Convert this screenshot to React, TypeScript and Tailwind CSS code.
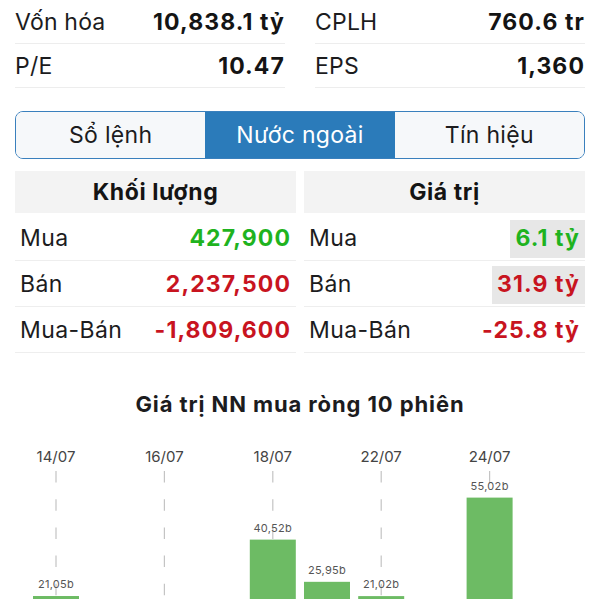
import React from "react";

const font = { fontFamily: "Inter, 'Noto Sans', sans-serif" };

function TopCell({ label, value }: { label: string; value: string }) {
  return (
    <div className="flex h-[44px] items-center justify-between border-b border-[#ededed] pt-[1px]">
      <span className="text-[23px] text-[#1c1c1e] tracking-[0.2px]">{label}</span>
      <span className="text-[23px] font-bold text-[#141414] tracking-[1.1px]">{value}</span>
    </div>
  );
}

type Row = { label: string; value: string; color: string; hl?: boolean };

function Table({ title, rows }: { title: string; rows: Row[] }) {
  return (
    <div className="flex flex-col">
      <div className="flex h-[42px] items-center justify-center bg-[#f3f3f3] text-[23px] font-bold text-[#141414] tracking-[0.6px]">
        {title}
      </div>
      <div className="mt-[2px] flex flex-col">
        {rows.map((r) => (
          <div
            key={r.label}
            className="flex h-[46px] items-center justify-between border-b border-[#eeeeee] pl-[5px] pt-[2px]"
          >
            <span className="text-[23px] text-[#1c1c1e] tracking-[0.4px]">{r.label}</span>
            <span
              className={
                "flex h-[38px] items-center px-[5px] text-[23px] font-bold tracking-[1.1px] " +
                r.color +
                (r.hl ? " bg-[#e7e7e7]" : "")
              }
            >
              {r.value}
            </span>
          </div>
        ))}
      </div>
    </div>
  );
}

const bars = [
  { d: "14/07", v: 21.05 },
  { d: "15/07", v: 6.1 },
  { d: "16/07", v: 4.3 },
  { d: "17/07", v: 8.7 },
  { d: "18/07", v: 40.52 },
  { d: "21/07", v: 25.95 },
  { d: "22/07", v: 21.02 },
  { d: "23/07", v: 9.4 },
  { d: "24/07", v: 55.02 },
  { d: "25/07", v: 7.2 },
];

function Chart() {
  const base = 218;
  const k = 2.897;
  const slot = 54.2;
  const x0 = 56;
  return (
    <svg width="600" height="160" viewBox="0 0 600 160" className="block">
      {bars.map((b, i) => {
        const cx = x0 + i * slot;
        if (i % 2 !== 0) return null;
        return (
          <g key={"l" + i}>
            <text
              x={cx}
              y={23}
              textAnchor="middle"
              fontSize="15"
              fill="#444444"
              style={font}
            >
              {b.d}
            </text>
            <line
              x1={cx}
              x2={cx}
              y1={32}
              y2={base}
              stroke="#c4c4c4"
              strokeWidth="1.2"
              strokeDasharray="11.5 16.7"
            />
          </g>
        );
      })}
      {bars.map((b, i) => {
        const cx = x0 + i * slot;
        const h = b.v * k;
        const top = base - h;
        return (
          <g key={"b" + i}>
            <rect x={cx - 23} y={top} width={46} height={h} fill="#6dbb64" />
            {top - 8 < 158 && (
              <text
                x={cx}
                y={top - 8}
                textAnchor="middle"
                fontSize="11"
                fill="#555555"
                letterSpacing="0.3"
                style={font}
              >
                {b.v.toFixed(2).replace(".", ",")}b
              </text>
            )}
          </g>
        );
      })}
    </svg>
  );
}

export default function App() {
  return (
    <div className="h-[600px] w-[600px] overflow-hidden bg-white" style={font}>
      <div className="px-[15px]">
        <div className="grid grid-cols-2 gap-x-[30px]">
          <TopCell label="Vốn hóa" value="10,838.1 tỷ" />
          <TopCell label="CPLH" value="760.6 tr" />
          <TopCell label="P/E" value="10.47" />
          <TopCell label="EPS" value="1,360" />
        </div>

        <div className="mt-[23px] grid h-[48px] grid-cols-3 overflow-hidden rounded-[8px] border border-[#3a80bd] text-[23px] tracking-[0.3px]">
          <div className="flex items-center justify-center bg-[#f6f8fa] text-[#1c1c1e]">Sổ lệnh</div>
          <div className="flex items-center justify-center bg-[#2b7bba] text-white">Nước ngoài</div>
          <div className="flex items-center justify-center bg-[#f6f8fa] text-[#1c1c1e]">Tín hiệu</div>
        </div>

        <div className="mt-[12px] grid grid-cols-2 gap-x-[8px]">
          <Table
            title="Khối lượng"
            rows={[
              { label: "Mua", value: "427,900", color: "text-[#1fb31f]" },
              { label: "Bán", value: "2,237,500", color: "text-[#c8141f]" },
              { label: "Mua-Bán", value: "-1,809,600", color: "text-[#c8141f]" },
            ]}
          />
          <Table
            title="Giá trị"
            rows={[
              { label: "Mua", value: "6.1 tỷ", color: "text-[#1fb31f]", hl: true },
              { label: "Bán", value: "31.9 tỷ", color: "text-[#c8141f]", hl: true },
              { label: "Mua-Bán", value: "-25.8 tỷ", color: "text-[#c8141f]" },
            ]}
          />
        </div>

        <div className="mt-[37px] flex h-[28px] items-center justify-center text-[22px] font-bold text-[#1c1c1e] tracking-[0.9px]">
          Giá trị NN mua ròng 10 phiên
        </div>
      </div>
      <div className="mt-[21px]">
        <Chart />
      </div>
    </div>
  );
}
